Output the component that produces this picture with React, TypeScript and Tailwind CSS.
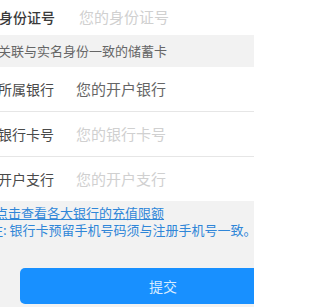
const rows = [
  { label: "所属银行", placeholder: "您的开户银行", dark: true },
  { label: "银行卡号", placeholder: "您的银行卡号", dark: false },
  { label: "开户支行", placeholder: "您的开户支行", dark: false },
];

const App = () => {
  return (
    <div className="w-[254px] h-[307px] overflow-hidden bg-[#f2f2f2] font-['Noto_Sans_CJK_SC',sans-serif]">
      <div className="-ml-[6px] w-[330px]">
        {/* id row */}
        <div className="flex h-[35px] items-center bg-white pl-[5px]">
          <span className="w-[80px] text-[14px] font-medium text-[#3a3a3a]">身份证号</span>
          <span className="text-[15px] text-[#d0d0d0]">您的身份证号</span>
        </div>

        <div className="flex h-[32px] items-center pl-[4px] text-[13px] text-[#666]">
          关联与实名身份一致的储蓄卡
        </div>

        <div className="bg-white">
          {rows.map((row, i) => (
            <div
              key={row.label}
              className={
                i < rows.length - 1
                  ? "flex h-[45px] items-center border-b border-[#e6e6e6] pl-[4px]"
                  : "flex h-[44px] items-center pl-[4px]"
              }
            >
              <span className="w-[78px] text-[14px] text-[#4a4a4a]">{row.label}</span>
              <span
                className={
                  row.dark
                    ? "text-[15px] text-[#666]"
                    : "text-[15px] text-[#d0d0d0]"
                }
              >
                {row.placeholder}
              </span>
            </div>
          ))}
        </div>

        <div className="pt-[3px] text-[13px] leading-[17px] text-[#2f86d8]">
          <p className="pl-[1px] underline">点击查看各大银行的充值限额</p>
          <p className="-ml-[4px] whitespace-nowrap">注: 银行卡预留手机号码须与注册手机号一致。</p>
        </div>

        <div className="mt-[30px] ml-[26px] flex h-[36px] w-[286px] items-center justify-center rounded-[5px] bg-[#1890ff] text-[14px] text-[#d6ebff]">
          提交
        </div>
      </div>
    </div>
  );
};

export default App;
